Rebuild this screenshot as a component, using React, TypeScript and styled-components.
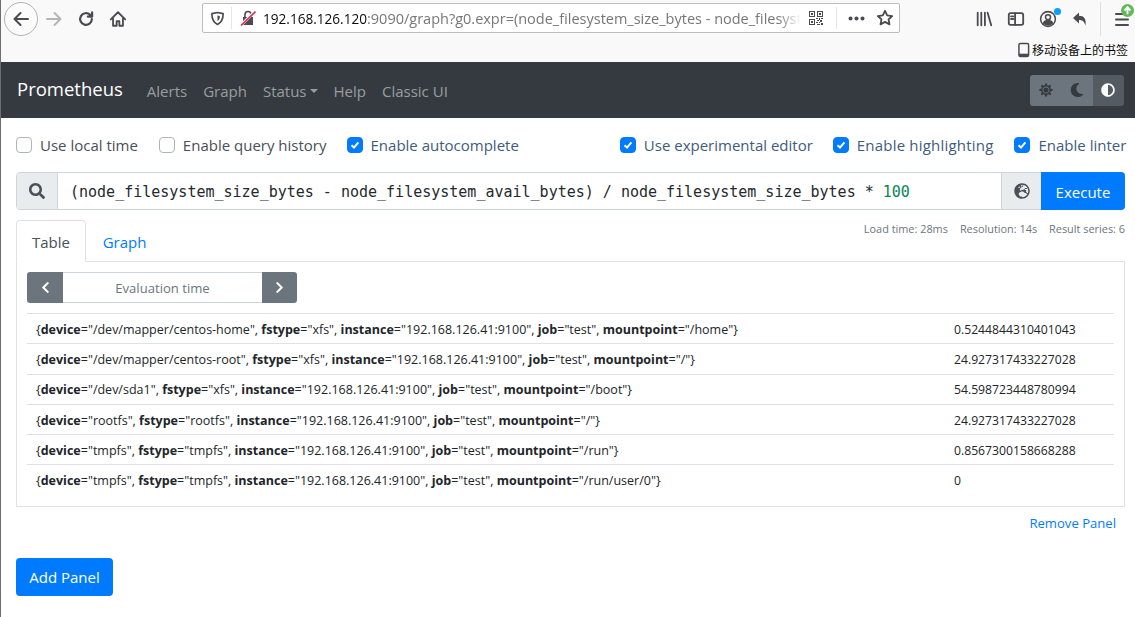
import React from 'react'
import styled, { createGlobalStyle } from 'styled-components'
import { FaSearch, FaGlobeEurope, FaSun, FaMoon, FaAdjust, FaChevronLeft, FaChevronRight } from 'react-icons/fa'

const GlobalStyle = createGlobalStyle`
  html, body {
    margin: 0;
    padding: 0;
    background: #fff;
    overflow: hidden;
  }
  * { box-sizing: border-box; }
`

const Page = styled.div`
  width: 1135px;
  height: 617px;
  overflow: hidden;
  border-left: 1px solid #6e6e6e;
  font-family: 'Open Sans', 'Noto Sans', sans-serif;
  color: #212529;
`

const Chrome = styled.div`
  height: 62px;
  background: #f9f9fa;
`

const Toolbar = styled.div`
  height: 37px;
  display: flex;
  align-items: center;
`

const NavIcons = styled.div`
  width: 201px;
  display: flex;
  align-items: center;
  padding-left: 3px;
  flex-shrink: 0;
`

const BackCircle = styled.div`
  width: 34px;
  height: 34px;
  border: 1px solid #b4b4b4;
  border-radius: 50%;
  background: #fbfbfb;
  display: flex;
  align-items: center;
  justify-content: center;
`

const NavButton = styled.div`
  width: 32px;
  height: 34px;
  display: flex;
  align-items: center;
  justify-content: center;
`

const UrlBar = styled.div`
  width: 698px;
  height: 30px;
  margin-bottom: 1px;
  background: #fff;
  border: 1px solid #bdbdbd;
  border-radius: 2px;
  display: flex;
  align-items: center;
  flex-shrink: 0;
`

const ShieldSlot = styled.div`
  width: 29px;
  height: 22px;
  display: flex;
  align-items: center;
  justify-content: center;
  border-right: 1px solid #e4e4e4;
`

const LockSlot = styled.div`
  width: 31px;
  display: flex;
  justify-content: center;
  flex-shrink: 0;
`

const UrlText = styled.div`
  width: 542px;
  font-size: 14.5px;
  white-space: nowrap;
  color: #777;
  -webkit-mask-image: linear-gradient(to right, #000 515px, transparent 538px);
  mask-image: linear-gradient(to right, #000 515px, transparent 538px);

  b {
    font-weight: 400;
    font-size: 13.6px;
    color: #0c0c0d;
  }
`

const UrlActions = styled.div`
  flex: 1;
  display: flex;
  align-items: center;
  padding-left: 4px;
`

const UrlDivider = styled.div`
  width: 1px;
  height: 22px;
  background: #e4e4e4;
  margin: 0 11px 0 13px;
`

const StarSlot = styled.div`
  margin-left: 11px;
  display: flex;
`

const RightIcons = styled.div`
  flex: 1;
  display: flex;
  align-items: center;
  padding: 1px 0 0 68px;
`

const RightIcon = styled.div`
  position: relative;
  width: 32px;
  height: 24px;
  flex-shrink: 0;
  display: flex;
  align-items: center;
  justify-content: center;
`

const ToolbarSep = styled.div`
  width: 1px;
  height: 34px;
  background: #e0e0e0;
  margin: 0 5px 0 4px;
  flex-shrink: 0;
`

const Badge = styled.span<{ $top: number; $right: number }>`
  position: absolute;
  display: flex;
  top: ${(p) => p.$top}px;
  right: ${(p) => p.$right}px;
`

const BookmarkRow = styled.div`
  height: 25px;
  display: flex;
  justify-content: flex-end;
  align-items: center;
  padding-right: 7px;
  gap: 2px;
  font-family: 'Noto Sans CJK SC', sans-serif;
  font-size: 12px;
  color: #0c0c0d;
`

const Navbar = styled.nav`
  height: 56px;
  background: #343a40;
  display: flex;
  align-items: center;
  padding: 0 11px 0 16px;
`

const Brand = styled.div`
  font-size: 18.5px;
  color: #fff;
  margin-right: 24px;
  margin-top: -3px;
`

const NavLink = styled.div<{ $gap: number }>`
  font-size: 15px;
  padding-top: 1px;
  color: rgba(255, 255, 255, 0.5);
  margin-right: ${(p) => p.$gap}px;
  display: flex;
  align-items: center;
`

const Caret = styled.span`
  width: 0;
  height: 0;
  margin-left: 3px;
  border-top: 4px solid rgba(255, 255, 255, 0.5);
  border-left: 4px solid transparent;
  border-right: 4px solid transparent;
`

const ThemeGroup = styled.div`
  margin-left: auto;
  display: flex;
  height: 31px;
  border-radius: 3px;
  overflow: hidden;
`

const ThemeButton = styled.div<{ $active?: boolean }>`
  width: 31.4px;
  display: flex;
  align-items: center;
  justify-content: center;
  font-size: 14px;
  background: ${(p) => (p.$active ? '#545b62' : '#6c757d')};
  color: ${(p) => (p.$active ? '#fff' : '#343a40')};
`

const Content = styled.main`
  padding: 0 10px 0 15px;
`

const OptionsRow = styled.div`
  height: 54px;
  display: flex;
  align-items: center;
`

const Option = styled.label<{ $gap?: number }>`
  display: flex;
  align-items: center;
  gap: 8px;
  margin-right: ${(p) => p.$gap ?? 0}px;
`

const Box = styled.span<{ $on?: boolean }>`
  width: 16px;
  height: 16px;
  border-radius: 4px;
  background: ${(p) => (p.$on ? '#007bff' : '#fff')};
  border: 1px solid ${(p) => (p.$on ? '#007bff' : '#adb5bd')};
  display: flex;
  align-items: center;
  justify-content: center;
`

const OptionText = styled.span<{ $on?: boolean; $track?: number }>`
  font-size: 15px;
  letter-spacing: ${(p) => p.$track ?? 0}px;
  color: ${(p) => (p.$on ? '#3e5c7c' : '#495057')};
  white-space: nowrap;
`

const InputGroup = styled.div`
  height: 38px;
  display: flex;
  border: 1px solid #ced4da;
  border-radius: 4px;
`

const Addon = styled.div<{ $w: number }>`
  width: ${(p) => p.$w}px;
  background: #e9ecef;
  display: flex;
  align-items: center;
  justify-content: center;
  color: #495057;
  font-size: 16px;
  flex-shrink: 0;
`

const SearchAddon = styled(Addon)`
  border-right: 1px solid #ced4da;
  border-radius: 3px 0 0 3px;
`

const GlobeAddon = styled(Addon)`
  border-left: 1px solid #ced4da;
`

const Expression = styled.div`
  flex: 1;
  padding: 1px 14px 0 12px;
  display: flex;
  align-items: center;
  font-family: 'DejaVu Sans Mono', monospace;
  font-size: 15px;
  color: #24292e;
  white-space: pre;
`

const NumberToken = styled.span`
  color: #098658;
`

const ExecuteButton = styled.div`
  width: 84px;
  margin: -1px;
  padding-top: 1px;
  background: #007bff;
  color: #fff;
  font-size: 15px;
  display: flex;
  align-items: center;
  justify-content: center;
  border-radius: 0 4px 4px 0;
`

const TabRow = styled.div`
  position: relative;
  height: 42px;
  margin-top: 9px;
  display: flex;
  align-items: flex-end;
`

const Tab = styled.div<{ $active?: boolean }>`
  width: ${(p) => (p.$active ? 70 : 77)}px;
  height: 42px;
  padding-top: 1px;
  display: flex;
  align-items: center;
  justify-content: center;
  font-size: 15px;
  margin-bottom: -1px;
  color: ${(p) => (p.$active ? '#495057' : '#007bff')};
  background: ${(p) => (p.$active ? '#fff' : 'transparent')};
  border: 1px solid ${(p) => (p.$active ? '#dee2e6' : 'transparent')};
  border-bottom-color: ${(p) => (p.$active ? '#fff' : 'transparent')};
  border-radius: 4px 4px 0 0;
  position: relative;
  z-index: 1;
`

const Metrics = styled.div`
  position: absolute;
  right: 0;
  top: 2px;
  display: flex;
  gap: 12px;
  font-size: 10.9px;
  color: #6c757d;
`

const TabPane = styled.div`
  height: 246px;
  border: 1px solid #dee2e6;
  padding: 10px;
`

const TimeControl = styled.div`
  width: 270px;
  height: 31px;
  display: flex;
`

const TimeButton = styled.div<{ $side: 'left' | 'right' }>`
  width: ${(p) => (p.$side === 'left' ? 36 : 35)}px;
  background: #6c757d;
  color: #fff;
  font-size: 13px;
  display: flex;
  align-items: center;
  justify-content: center;
  flex-shrink: 0;
  border-radius: ${(p) => (p.$side === 'left' ? '3px 0 0 3px' : '0 3px 3px 0')};
`

const TimeInput = styled.div`
  flex: 1;
  border-top: 1px solid #ced4da;
  border-bottom: 1px solid #ced4da;
  color: #6c757d;
  font-size: 13.1px;
  display: flex;
  align-items: center;
  justify-content: center;
`

const ResultTable = styled.div`
  margin-top: 10px;
`

const Row = styled.div`
  height: 30.3px;
  padding: 1px 0 0 9px;
  display: grid;
  grid-template-columns: 918px 1fr;
  align-items: center;
  border-top: 1px solid #dee2e6;
  font-size: 12.5px;
  color: #212529;
  white-space: nowrap;
`

const Value = styled.div`
  font-size: 12.2px;
`

const RemoveRow = styled.div`
  display: flex;
  justify-content: flex-end;
  padding: 7px 9px 0 0;
  font-size: 13.1px;
  color: #007bff;
`

const AddPanel = styled.div`
  width: 97px;
  height: 38px;
  margin-top: 26px;
  background: #007bff;
  color: #fff;
  font-size: 15px;
  border-radius: 4px;
  display: flex;
  align-items: center;
  justify-content: center;
`

const Stroke = ({ children, size = 20, color = '#4a4a4f', w = 2 }: { children: React.ReactNode; size?: number; color?: string; w?: number }) => (
  <svg width={size} height={size} viewBox="0 0 20 20" fill="none" stroke={color} strokeWidth={w} strokeLinecap="round" strokeLinejoin="round">
    {children}
  </svg>
)

const CheckMark = () => (
  <svg width="10" height="10" viewBox="0 0 10 10" fill="none" stroke="#fff" strokeWidth="2">
    <path d="M1.5 5.3 L4 7.6 L8.4 2.4" />
  </svg>
)

const QrIcon = () => (
  <svg width="14" height="14" viewBox="0 0 14 14" fill="#4a4a4f" shapeRendering="crispEdges">
    <path d="M0 0h6v6H0zM1 1v4h4V1zM8 0h6v6H8zM9 1v4h4V1zM0 8h6v6H0zM1 9v4h4V9z" fillRule="evenodd" />
    <path d="M2 2h2v2H2zM10 2h2v2h-2zM2 10h2v2H2z" />
    <path d="M7 7h2v1H7zM10 7h1v2h-1zM12 7h2v1h-2zM8 9h2v1H8zM11 9h2v2h-2zM7 11h2v1H7zM10 11h1v1h-1zM8 13h3v1H8zM12 12h2v2h-2z" />
  </svg>
)

const rows = [
  { device: '/dev/mapper/centos-home', fstype: 'xfs', mount: '/home', value: '0.5244844310401043' },
  { device: '/dev/mapper/centos-root', fstype: 'xfs', mount: '/', value: '24.927317433227028' },
  { device: '/dev/sda1', fstype: 'xfs', mount: '/boot', value: '54.598723448780994' },
  { device: 'rootfs', fstype: 'rootfs', mount: '/', value: '24.927317433227028' },
  { device: 'tmpfs', fstype: 'tmpfs', mount: '/run', value: '0.8567300158668288' },
  { device: 'tmpfs', fstype: 'tmpfs', mount: '/run/user/0', value: '0' },
]

const App = () => {
  return (
    <Page>
      <GlobalStyle />
      <Chrome>
        <Toolbar>
          <NavIcons>
            <BackCircle>
              <Stroke size={20}>
                <path d="M17 10H3.500M9.500 4L3.500 10l6 6" />
              </Stroke>
            </BackCircle>
            <NavButton>
              <Stroke size={20} color="#b5b5b6">
                <path d="M3 10h13.500M10.500 4l6 6-6 6" />
              </Stroke>
            </NavButton>
            <NavButton>
              <Stroke size={18} w={2.400}>
                <path d="M16.500 10a6.500 6.500 0 1 1-2-4.700L16.500 7" />
                <path d="M16.800 2.500V7.300H12" fill="#4a4a4f" />
              </Stroke>
            </NavButton>
            <NavButton>
              <Stroke size={18} w={2}>
                <path d="M2 10.500L10 2.500l8 8M4.500 9v8.500h4V12.500h3v5h4V9" />
              </Stroke>
            </NavButton>
          </NavIcons>
          <UrlBar>
            <ShieldSlot>
              <Stroke size={15} w={2.200}>
                <path d="M10 2l7.500 1.500c0 6.500-1 11-7.500 14.500C3.500 14.500 2.500 10 2.500 3.500z" />
                <path d="M10 6l3.200.7c0 3-.6 5-3.200 6.500z" fill="#4a4a4f" stroke="none" />
              </Stroke>
            </ShieldSlot>
            <LockSlot>
              <svg width="16" height="16" viewBox="0 0 16 16">
                <path d="M3 7h10v8H3z" fill="#4a4a4f" />
                <path d="M5 7V4.500a3 3 0 0 1 6 0V7" fill="none" stroke="#4a4a4f" strokeWidth="1.600" />
                <path d="M0.500 15.500L15.500 1" stroke="#fff" strokeWidth="3" />
                <path d="M1 15.500L15.500 1.500" stroke="#e22850" strokeWidth="1.600" />
              </svg>
            </LockSlot>
            <UrlText>
              <b>192.168.126.120</b>:9090/graph?g0.expr=(node_filesystem_size_bytes - node_filesyste
            </UrlText>
            <UrlActions>
              <QrIcon />
              <UrlDivider />
              <svg width="17" height="5" viewBox="0 0 17 5" fill="#4a4a4f">
                <circle cx="2.500" cy="2.500" r="2" />
                <circle cx="8.500" cy="2.500" r="2" />
                <circle cx="14.500" cy="2.500" r="2" />
              </svg>
              <StarSlot>
                <Stroke size={18}>
                  <path d="M10 2l2.400 5.100 5.600.700-4.100 3.800 1.100 5.500-5-2.800-5 2.800 1.100-5.500L2 7.800l5.600-.700z" />
                </Stroke>
              </StarSlot>
            </UrlActions>
          </UrlBar>
          <RightIcons>
            <RightIcon>
              <Stroke size={18}>
                <path d="M3 3v14M7 3v14M11 3v14M14 3l4 14" />
              </Stroke>
            </RightIcon>
            <RightIcon>
              <Stroke size={18}>
                <rect x="2" y="3.500" width="16" height="13" rx="2" />
                <path d="M9 3.500v13M4.500 7H7M4.500 10H7" />
              </Stroke>
            </RightIcon>
            <RightIcon>
              <Stroke size={18} w={1.700}>
                <circle cx="10" cy="10" r="8.200" />
                <circle cx="10" cy="8" r="2.800" />
                <path d="M5 14.500c1-2 3-2.700 5-2.700s4 .7 5 2.700c-1.200 1.200-3 1.800-5 1.800s-3.800-.6-5-1.800z" fill="#4a4a4f" />
              </Stroke>
              <Badge $top={1} $right={3}>
                <svg width="7" height="7" viewBox="0 0 7 7">
                  <circle cx="3.500" cy="3.500" r="3.500" fill="#0a9dff" />
                </svg>
              </Badge>
            </RightIcon>
            <RightIcon>
              <svg width="16" height="16" viewBox="0 0 16 16" fill="#4a4a4f">
                <path d="M7 1.500L1 7l6 5.500V9c3 0 5 1 6.500 5.500C14.500 8 12 4.800 7 4.800z" />
              </svg>
            </RightIcon>
            <ToolbarSep />
            <RightIcon>
              <Stroke size={20}>
                <path d="M4 5h12M4 10.500h12M4 16h12" />
              </Stroke>
              <Badge $top={-3} $right={4}>
                <svg width="13" height="13" viewBox="0 0 14 14">
                  <circle cx="7" cy="7" r="7" fill="#63b75a" />
                  <path d="M7 11V4M3.800 7L7 3.500 10.200 7" fill="none" stroke="#fff" strokeWidth="2" />
                </svg>
              </Badge>
            </RightIcon>
          </RightIcons>
        </Toolbar>
        <BookmarkRow>
          <svg width="12" height="16" viewBox="0 0 13 16">
            <rect x="1" y="1" width="10.500" height="14" rx="1.500" fill="none" stroke="#4a4a4f" strokeWidth="1.600" />
            <rect x="1" y="12" width="10.500" height="3" fill="#4a4a4f" />
          </svg>
          移动设备上的书签
        </BookmarkRow>
      </Chrome>
      <Navbar>
        <Brand>Prometheus</Brand>
        <NavLink $gap={16}>Alerts</NavLink>
        <NavLink $gap={16}>Graph</NavLink>
        <NavLink $gap={16}>
          Status
          <Caret />
        </NavLink>
        <NavLink $gap={16}>Help</NavLink>
        <NavLink $gap={0}>Classic UI</NavLink>
        <ThemeGroup>
          <ThemeButton>
            <FaSun />
          </ThemeButton>
          <ThemeButton>
            <FaMoon />
          </ThemeButton>
          <ThemeButton $active>
            <FaAdjust />
          </ThemeButton>
        </ThemeGroup>
      </Navbar>
      <Content>
        <OptionsRow>
          <Option $gap={21}>
            <Box />
            <OptionText>Use local time</OptionText>
          </Option>
          <Option $gap={20}>
            <Box />
            <OptionText>Enable query history</OptionText>
          </Option>
          <Option $gap={101}>
            <Box $on>
              <CheckMark />
            </Box>
            <OptionText $on>Enable autocomplete</OptionText>
          </Option>
          <Option $gap={20}>
            <Box $on>
              <CheckMark />
            </Box>
            <OptionText $on>Use experimental editor</OptionText>
          </Option>
          <Option $gap={21}>
            <Box $on>
              <CheckMark />
            </Box>
            <OptionText $on $track={0.2}>
              Enable highlighting
            </OptionText>
          </Option>
          <Option>
            <Box $on>
              <CheckMark />
            </Box>
            <OptionText $on>Enable linter</OptionText>
          </Option>
        </OptionsRow>
        <InputGroup>
          <SearchAddon $w={41}>
            <FaSearch />
          </SearchAddon>
          <Expression>
            (node_filesystem_size_bytes - node_filesystem_avail_bytes) / node_filesystem_size_bytes * <NumberToken>100</NumberToken>
          </Expression>
          <GlobeAddon $w={41}>
            <FaGlobeEurope />
          </GlobeAddon>
          <ExecuteButton>Execute</ExecuteButton>
        </InputGroup>
        <TabRow>
          <Tab $active>Table</Tab>
          <Tab>Graph</Tab>
          <Metrics>
            <span>Load time: 28ms</span>
            <span>Resolution: 14s</span>
            <span>Result series: 6</span>
          </Metrics>
        </TabRow>
        <TabPane>
          <TimeControl>
            <TimeButton $side="left">
              <FaChevronLeft />
            </TimeButton>
            <TimeInput>Evaluation time</TimeInput>
            <TimeButton $side="right">
              <FaChevronRight />
            </TimeButton>
          </TimeControl>
          <ResultTable>
            {rows.map((r, i) => (
              <Row key={i}>
                <div>
                  {'{'}
                  <b>device</b>="{r.device}", <b>fstype</b>="{r.fstype}", <b>instance</b>="192.168.126.41:9100", <b>job</b>="test", <b>mountpoint</b>="{r.mount}"{'}'}
                </div>
                <Value>{r.value}</Value>
              </Row>
            ))}
          </ResultTable>
        </TabPane>
        <RemoveRow>Remove Panel</RemoveRow>
        <AddPanel>Add Panel</AddPanel>
      </Content>
    </Page>
  )
}

export default App
